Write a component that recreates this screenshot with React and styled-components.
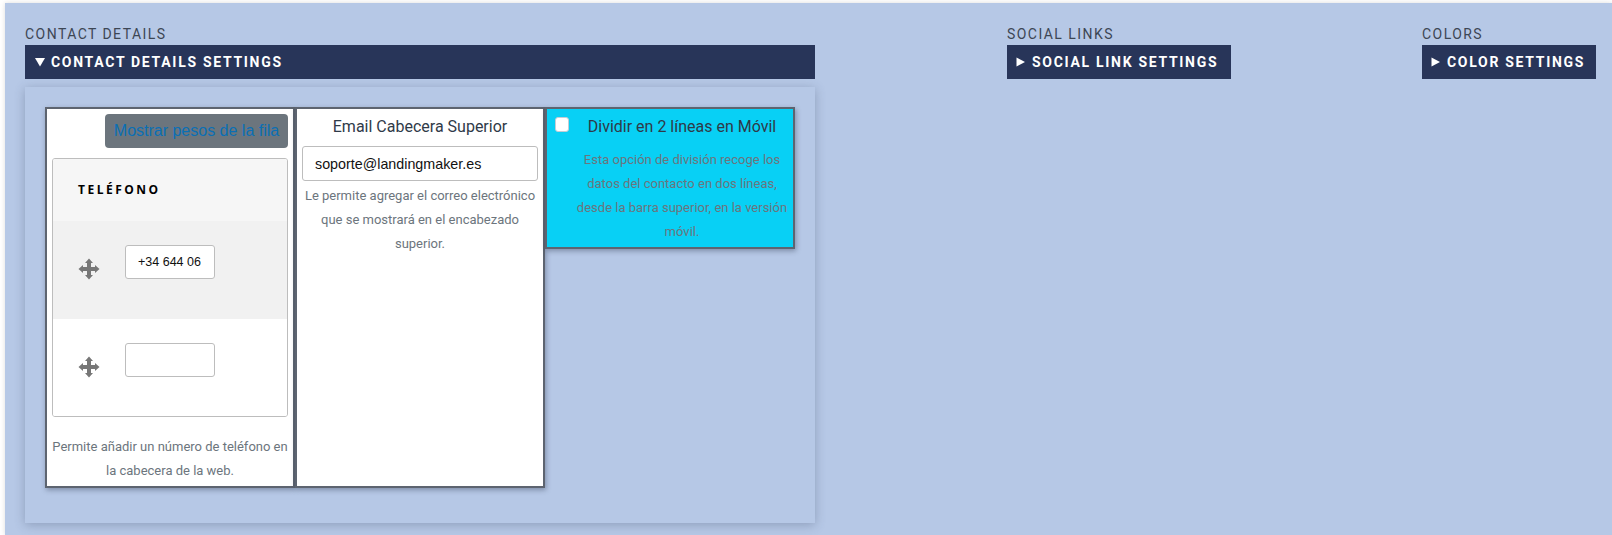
import React from "react";
import styled, { createGlobalStyle } from "styled-components";

const Global = createGlobalStyle`
  html, body { margin: 0; padding: 0; background: #fff; }
  body { font-family: "Roboto", "Liberation Sans", sans-serif; }
  * { box-sizing: border-box; }
`;
const Page = styled.div`
  margin: 3px 0 0 5px;
  height: 532px;
  background: #b6c8e6;
  box-shadow: 0 0 5px rgba(0, 0, 0, 0.14);
  padding: 23px 0 0 20px;
  display: flex;
  overflow: hidden;
`;
const Column = styled.section`
  width: ${(p) => p.$width}px;
  flex: none;
`;
const Label = styled.div`
  height: 19px;
  font: 400 14px/16px "Roboto", sans-serif;
  letter-spacing: 1.45px;
  color: #3d4654;
`;
const Toggle = styled.div`
  display: flex;
  align-items: center;
  width: ${(p) => p.$width}px;
  height: 34px;
  padding-left: ${(p) => p.$pad}px;
  gap: ${(p) => p.$gap}px;
  background: #283559;
  color: #fff;
  font: 700 14px/1 "Roboto", sans-serif;
  letter-spacing: 1.7px;
  white-space: nowrap;
`;
const Panel = styled.div`
  margin-top: 8px;
  width: 790px;
  height: 436px;
  padding: 20px;
  background: #b6c8e6;
  box-shadow: 0 2px 10px rgba(60, 70, 100, 0.32);
  display: flex;
  align-items: flex-start;
`;
const Block = styled.div`
  width: 250px;
  height: ${(p) => p.$height}px;
  flex: none;
  border: 2px solid #5d6470;
  background: ${(p) => p.$bg || "#fff"};
  box-shadow: 1px 2px 5px rgba(40, 50, 70, 0.4);
  position: relative;
`;
const FirstInner = styled.div`
  display: flex;
  flex-direction: column;
  padding: 5px 5px 0;
`;
const WeightsButton = styled.button`
  align-self: flex-end;
  width: 183px;
  height: 34px;
  padding: 0;
  border: 0;
  border-radius: 4px;
  background: #6c757d;
  color: #0a6fb5;
  font: 400 16px "Liberation Sans", sans-serif;
`;
const Repeater = styled.div`
  margin-top: 10px;
  height: 259px;
  border: 1px solid #bdbdbd;
  border-radius: 3px;
  overflow: hidden;
`;
const RepeaterHead = styled.div`
  height: 62px;
  padding: 24px 0 0 25px;
  background: #f6f6f6;
  color: #000;
  font: 700 12px/14px "Open Sans", sans-serif;
  letter-spacing: 2.5px;
`;
const RepeaterRow = styled.div`
  height: 98px;
  background: ${(p) => p.$bg};
  display: flex;
  align-items: flex-start;
  padding: 24px 0 0 25px;
`;
const Move = styled.svg`
  width: 22px;
  height: 22px;
  margin-top: 13px;
  flex: none;
  fill: #777;
`;
const PhoneInput = styled.input`
  margin-left: 25px;
  width: 90px;
  height: 34px;
  padding: 0 12px;
  border: 1px solid #bdbdbd;
  border-radius: 3px;
  background: #fff;
  color: #111;
  font: 400 12.5px "Liberation Sans", sans-serif;
  outline: none;
`;
const Help = styled.p`
  margin: ${(p) => p.$mt || 0}px 0 0;
  color: #6c757d;
  font: 400 13px/24px "Roboto", sans-serif;
  text-align: center;
  ${(p) => p.$pl && `padding-left: ${p.$pl}px;`}
`;
const Title = styled.div`
  font: 400 16px/24px "Roboto", sans-serif;
  color: #2f3a48;
  text-align: center;
  padding-top: 6px;
  ${(p) => p.$pl && `padding-left: ${p.$pl}px;`}
`;
const SecondInner = styled.div`
  padding: 0 5px;
`;
const EmailInput = styled.input`
  display: block;
  margin-top: 7px;
  width: 236px;
  height: 35px;
  padding: 0 12px;
  border: 1px solid #bdbdbd;
  border-radius: 3px;
  color: #111;
  font: 400 14.3px "Liberation Sans", sans-serif;
  outline: none;
`;
const Check = styled.input`
  position: absolute;
  left: 8px;
  top: 8px;
  width: 14px;
  height: 15px;
  margin: 0;
  appearance: none;
  background: #fff;
  border: 1px solid #c4ccd4;
  border-radius: 3px;
`;

const MoveIcon = () => (
  <Move viewBox="0 0 22 22">
    <path d="M11 .5L15 5H13V9H17V7L21.5 11L17 15V13H13V17H15L11 21.5L7 17H9V13H5V15L.5 11L5 7V9H9V5H7Z" />
  </Move>
);
const Tri = styled.svg`
  width: ${(p) => p.$size}px;
  height: 10px;
  fill: #fff;
  flex: none;
`;
const Arrow = ({ down }) => (
  <Tri viewBox={down ? "0 0 10 10" : "0 0 9 10"} $size={down ? 10 : 9}>
    {down ? <path d="M0 1h10L5 9.5z" /> : <path d="M0.5 0.5L9 5L0.5 9.5z" />}
  </Tri>
);

export default function App() {
  return (
    <>
      <Global />
      <Page>
        <Column $width={982}>
          <Label>CONTACT DETAILS</Label>
          <Toggle $width={790} $pad={10} $gap={6}>
            <Arrow down />
            CONTACT DETAILS SETTINGS
          </Toggle>
          <Panel>
            <Block $height={381}>
              <FirstInner>
                <WeightsButton>Mostrar pesos de la fila</WeightsButton>
                <Repeater>
                  <RepeaterHead>TELÉFONO</RepeaterHead>
                  <RepeaterRow $bg="#f1f1f1">
                    <MoveIcon />
                    <PhoneInput defaultValue="+34 644 06" />
                  </RepeaterRow>
                  <RepeaterRow $bg="#fff">
                    <MoveIcon />
                    <PhoneInput />
                  </RepeaterRow>
                </Repeater>
                <Help $mt={18}>
                  Permite añadir un número de teléfono en la cabecera de la web.
                </Help>
              </FirstInner>
            </Block>
            <Block $height={381}>
              <SecondInner>
                <Title>Email Cabecera Superior</Title>
                <EmailInput defaultValue="soporte@landingmaker.es" />
                <Help $mt={3}>
                  Le permite agregar el correo electrónico que se mostrará en el encabezado superior.
                </Help>
              </SecondInner>
            </Block>
            <Block $height={142} $bg="#08d0f5">
              <Check type="checkbox" />
              <Title $pl={24}>Dividir en 2 líneas en Móvil</Title>
              <Help $mt={9} $pl={24}>
                Esta opción de división recoge los datos del contacto en dos líneas, desde la barra superior, en la versión móvil.
              </Help>
            </Block>
          </Panel>
        </Column>
        <Column $width={415}>
          <Label>SOCIAL LINKS</Label>
          <Toggle $width={224} $pad={9} $gap={7}>
            <Arrow />
            SOCIAL LINK SETTINGS
          </Toggle>
        </Column>
        <Column $width={174}>
          <Label>COLORS</Label>
          <Toggle $width={174} $pad={9} $gap={7}>
            <Arrow />
            COLOR SETTINGS
          </Toggle>
        </Column>
      </Page>
    </>
  );
}
